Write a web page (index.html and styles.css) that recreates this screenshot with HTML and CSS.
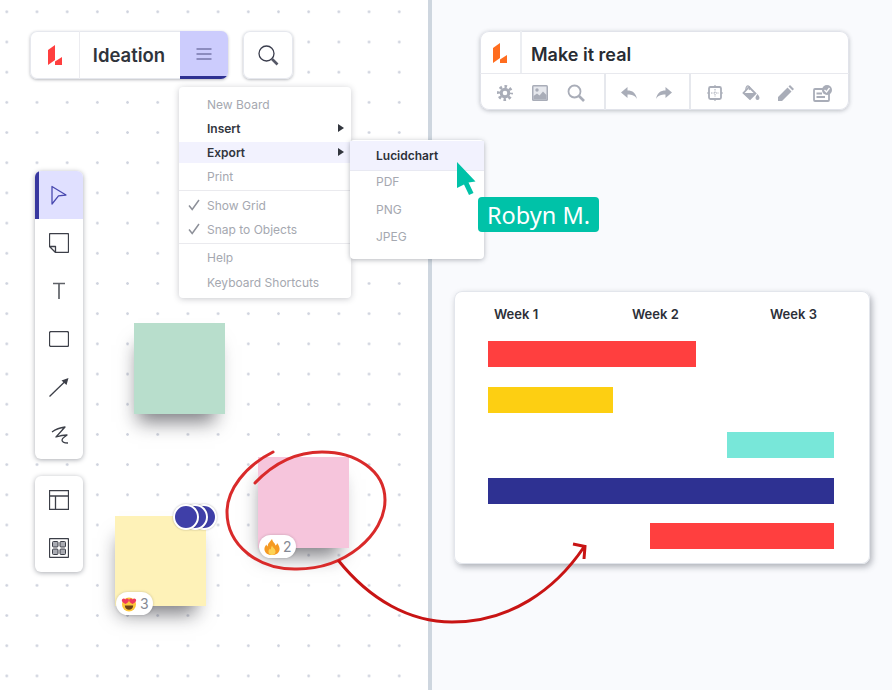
FILE: index.html
```html
<!DOCTYPE html>
<html lang="en">
<head>
<meta charset="utf-8">
<title>Ideation</title>
<link rel="stylesheet" href="styles.css">
</head>
<body>
<main class="stage">
  <section class="pane-left">
    <div class="top-row">
      <div class="panel board-bar">
        <div class="logo-cell">
          <svg class="logo" viewBox="0 0 14 20" width="14" height="20"><path class="logo-red" d="M0 5 7 0V15L0 20Z"/><path class="logo-red" d="M7 20V16.500L14 12V20Z"/></svg>
        </div>
        <div class="board-title">Ideation</div>
        <div class="burger">
          <svg viewBox="0 0 16 12" width="16" height="12"><path class="burger-line" d="M.5 1H15.500M.5 6H15.500M.5 11H15.500"/></svg>
        </div>
      </div>
      <div class="panel search-btn">
        <svg viewBox="0 0 24 24" width="24" height="24"><circle class="ink-line" cx="10.500" cy="10.500" r="7.500"/><path class="search-handle" d="M16 16 21.500 21.500"/></svg>
      </div>
    </div>

    <div class="panel tools">
      <div class="tool tool-active"><svg viewBox="0 0 20 20" width="20" height="20"><path class="tool-navy" d="M3 1.500 17 10 9.500 10.800 3 19Z"/></svg></div>
      <div class="tool"><svg viewBox="0 0 20 20" width="20" height="20"><path class="tool-ink" d="M1.500.5H18.500Q19.500.5 19.500 1.500V18.500Q19.500 19.500 18.500 19.500H6.500L.5 13.500V1.500Q.5.5 1.500.5ZM.5 13.500H6.500V19.500"/></svg></div>
      <div class="tool"><svg viewBox="0 0 20 20" width="20" height="20"><path class="tool-text" d="M4 2.500H16M10 2.500V18"/></svg></div>
      <div class="tool"><svg viewBox="0 0 20 16" width="20" height="16"><rect class="tool-ink" x="0.500" y="0.500" width="19" height="15" rx="1.500"/></svg></div>
      <div class="tool"><svg viewBox="0 0 20 20" width="20" height="20"><path class="tool-ink" d="M.5 19.500 16 4.500"/><path class="tool-fill" d="M12.500 3.500 19.500 1 17.500 8Z"/></svg></div>
      <div class="tool"><svg viewBox="0 0 20 20" width="20" height="20"><path class="tool-ink" d="M3 7C7 4 12 2.500 16 2L7 12C10 11 14 10 18 10 16 12 13 13 13 15 13 17 16 18 19 18"/></svg></div>
    </div>

    <div class="panel tools tools-secondary">
      <div class="tool"><svg viewBox="0 0 20 20" width="20" height="20"><path class="tool-ink" d="M.5.500H19.500V19.500H.5ZM.5 6H19.500M6.500 6V19.500"/></svg></div>
      <div class="tool"><svg viewBox="0 0 20 20" width="20" height="20"><rect class="tool-ink" x="0.500" y="0.500" width="19" height="19" rx="1"/><rect class="tile" x="3.500" y="3.500" width="5.500" height="5.500" rx="1"/><rect class="tile" x="11" y="3.500" width="5.500" height="5.500" rx="1"/><rect class="tile" x="3.500" y="11" width="5.500" height="5.500" rx="1"/><rect class="tile" x="11" y="11" width="5.500" height="5.500" rx="1"/></svg></div>
    </div>

    <div class="sticky sticky-green"></div>
    <div class="sticky sticky-yellow"></div>
    <div class="sticky sticky-pink"></div>

    <div class="avatars">
      <span class="avatar avatar-front"></span><span class="avatar avatar-mid"></span><span class="avatar"></span>
    </div>

    <div class="reaction reaction-yellow">
      <svg viewBox="0 0 16 16" width="16" height="16"><circle class="face" cx="8" cy="8.500" r="7"/><path class="mouth" d="M3.800 9.500H12.200C12 12.500 10 13.800 8 13.800S4 12.500 3.800 9.500Z"/><path class="heart" d="M4.500 8C1 6 .3 4.500 1.200 3.200 2.200 2 3.800 2.300 4.500 3.500 5.200 2.300 6.800 2 7.600 3.200 8.400 4.500 7.800 6 4.500 8Z"/><path class="heart" d="M11.500 8C8.200 6 7.600 4.500 8.400 3.200 9.200 2 10.800 2.300 11.500 3.500 12.200 2.300 13.800 2 14.800 3.200 15.700 4.500 15 6 11.500 8Z"/></svg>
      <span>3</span>
    </div>
    <div class="reaction reaction-pink">
      <svg viewBox="0 0 16 16" width="16" height="16"><path class="flame-out" d="M8 0C8.500 3 11 4 11.500 6.500 12.500 6 13 5 13 4 15 6.500 16 9 15.500 11 15 14 12 16 8 16S1 14 .5 11C.2 9 1 7 2.500 5.500 2.700 6.500 3 7 3.800 7.500 3.500 4.500 6 3 8 0Z"/><path class="flame-in" d="M8 6.500C8.300 8.500 11 9.500 11.500 12 11.800 14.500 10 16 8 16S4.200 14.500 4.500 12C4.800 10.500 5.500 10 6 9.500 6.200 10 6.500 10.500 7 10.500 6.800 9 7.300 8 8 6.500Z"/></svg>
      <span>2</span>
    </div>

    <nav class="menu">
      <div class="menu-item muted">New Board</div>
      <div class="menu-item strong">Insert<span class="caret"></span></div>
      <div class="menu-item strong menu-hover">Export<span class="caret"></span></div>
      <div class="menu-item muted">Print</div>
      <hr class="menu-rule">
      <div class="menu-item muted"><svg class="check" viewBox="0 0 12 12" width="12" height="12"><path d="M1 6.500 4.200 10.500 11 1"/></svg>Show Grid</div>
      <div class="menu-item muted"><svg class="check" viewBox="0 0 12 12" width="12" height="12"><path d="M1 6.500 4.200 10.500 11 1"/></svg>Snap to Objects</div>
      <hr class="menu-rule rule-tight">
      <div class="menu-item muted">Help</div>
      <div class="menu-item muted menu-last">Keyboard Shortcuts</div>
    </nav>
  </section>

  <div class="pane-divider"></div>

  <section class="pane-right">
    <div class="panel doc-bar">
      <div class="doc-head">
        <div class="doc-logo">
          <svg viewBox="0 0 14 20" width="14" height="20"><path class="logo-orange" d="M0 5 7 0V15L0 20Z"/><path class="logo-orange" d="M7 20V16.500L14 12V20Z"/></svg>
        </div>
        <div class="doc-title">Make it real</div>
      </div>
      <div class="doc-tools">
        <div class="doc-group group-a">
          <svg viewBox="0 0 16 16" width="16" height="16"><circle class="gear-teeth" cx="8" cy="8" r="6.500"/><circle class="gear-ring" cx="8" cy="8" r="3.800"/></svg>
          <svg viewBox="0 0 16 16" width="16" height="16"><rect class="icon-fill" width="16" height="16" rx="1.500"/><rect class="sky" x="1.500" y="1.500" width="13" height="13"/><circle class="icon-fill" cx="5" cy="5" r="1.700"/><path class="icon-fill" d="M1.500 14.500V11L5 8.500 7.500 10.500 11 6.500 14.500 10V14.500Z"/></svg>
          <svg viewBox="0 0 18 18" width="18" height="18"><circle class="icon-line" cx="7.500" cy="7.500" r="6"/><path class="icon-thick" d="M12 12 17 17"/></svg>
        </div>
        <div class="doc-group group-b">
          <svg viewBox="0 0 16 14" width="16" height="14"><path class="icon-fill" d="M6.500 1V4.500C11.500 4.500 15 7 16 13 14 9.500 11 8.500 6.500 8.500V12L0 6.500Z"/></svg>
          <svg viewBox="0 0 16 14" width="16" height="14"><path class="icon-fill" d="M9.500 1V4.500C4.500 4.500 1 7 0 13 2 9.500 5 8.500 9.500 8.500V12L16 6.500Z"/></svg>
        </div>
        <div class="doc-group group-c">
          <svg viewBox="0 0 16 16" width="16" height="16"><rect class="icon-line" x="2" y="2" width="12" height="12" rx="1.500"/><path class="icon-thin" d="M8 0V2M8 14V16M0 8H2M14 8H16"/><path class="icon-dots" d="M8 4V12M4 8H12"/></svg>
          <svg viewBox="0 0 18 16" width="18" height="16"><path class="icon-line" d="M7 2 13.500 8.500 8 14 1.500 8Z"/><path class="icon-fill" d="M1 8H14L8 14.500Z"/><path class="icon-thin" d="M4 5C3.500 2.500 5 .5 6.500 1 8 1.500 8 3.500 7 5"/><path class="icon-fill" d="M15.500 9C16.500 10.500 17.500 11.500 17.500 13A2 2 0 1 1 13.500 13C13.500 11.500 14.500 10.500 15.500 9Z"/></svg>
          <svg viewBox="0 0 16 16" width="16" height="16"><path class="icon-fill" d="M12 0 16 4 14.500 5.500 10.500 1.500ZM9.500 2.500 13.500 6.500 4 16H0V12Z"/></svg>
          <svg viewBox="0 0 19 17" width="19" height="17"><rect class="icon-line" x="1" y="4" width="15" height="12" rx="1"/><path class="icon-line" d="M3.500 8.500H9M3.500 12H12"/><circle class="icon-fill" cx="14" cy="5" r="5"/><path class="check-white" d="M11.500 5 13.500 7 16.500 3"/></svg>
        </div>
      </div>
    </div>

    <div class="panel gantt">
      <div class="gantt-head"><span>Week 1</span><span>Week 2</span><span>Week 3</span></div>
      <div class="gantt-bars">
        <div class="bar bar-red bar-one"></div>
        <div class="bar bar-yellow bar-two"></div>
        <div class="bar bar-teal bar-three"></div>
        <div class="bar bar-navy bar-four"></div>
        <div class="bar bar-red bar-five"></div>
      </div>
    </div>
  </section>

  <aside class="submenu">
    <div class="sub-item sub-hover">Lucidchart</div>
    <div class="sub-item">PDF</div>
    <div class="sub-item">PNG</div>
    <div class="sub-item">JPEG</div>
  </aside>

  <svg class="ink-layer" viewBox="0 0 892 690" width="892" height="690">
    <path class="ink-circle" d="M273 452C245 466 227 490 227 512 227 545 258 570 297 569 345 569 385 535 385 500 385 470 355 452 322 452 295 452 272 465 255 483"/>
    <path class="ink-arrow" d="M338 560C370 600 410 622 452 622 510 622 555 590 584 547M573 544 585 546.500 584 559"/>
  </svg>

  <div class="cursor">
    <svg viewBox="0 0 20 34" width="20" height="34"><path class="cursor-arrow" d="M0 0 18.500 19.500 11.500 20.500 16.500 31 12 33 7 22.500 0 26Z"/></svg>
    <div class="cursor-label">Robyn M.</div>
  </div>
</main>
</body>
</html>
```
FILE: styles.css
```css
* { box-sizing: border-box; }
html, body { margin: 0; height: 100%; overflow: hidden; }
body { font-family: Inter, "Liberation Sans", sans-serif; color: #282c33; background: #fff; }

.stage { position: relative; display: flex; width: 892px; height: 690px; overflow: hidden; }

.pane-left {
  position: relative;
  flex: 0 0 428px;
  height: 690px;
  padding: 31px 0 0 30px;
  background-color: #fff;
  background-image: radial-gradient(circle, #cfd3de 0, #cfd3de 1px, transparent 1.6px);
  background-size: 30.2px 30.2px;
  background-position: 21.9px 26.9px;
}
.pane-divider { flex: 0 0 4px; height: 690px; background: #ced6df; }
.pane-right { flex: 0 0 460px; height: 690px; padding: 31px 0 0 48px; background: #f9fafd; }

.panel {
  background: #fff;
  border-radius: 7px;
  box-shadow: inset 0 0 0 1px #e6e8ee, 0 1px 3px rgba(50, 55, 70, .35);
}

.top-row { display: flex; gap: 15px; height: 48px; }
.board-bar { display: flex; width: 198px; overflow: hidden; }
.logo-cell { display: flex; align-items: center; justify-content: center; width: 50px; border-right: 1px solid #ececf0; }
.logo-red { fill: #ff3f3f; }
.logo-orange { fill: #ff6d1f; }
.board-title { display: flex; align-items: center; justify-content: center; width: 100px; padding-right: 2px; font-size: 18.500px; font-weight: 600; color: #30343b; }
.burger { display: flex; align-items: center; justify-content: center; width: 48px; background: #ccccfd; border-bottom: 3px solid #2e3192; }
.burger-line { fill: none; stroke: #4c4c80; stroke-width: 1; }
.ink-line { fill: none; stroke: #3a3d4d; stroke-width: 1.300; }
.search-btn { display: flex; align-items: center; justify-content: center; width: 50px; }
.search-handle { fill: none; stroke: #555866; stroke-width: 2.600; }

.tools { display: flex; flex-direction: column; width: 48px; margin: 92px 0 0 5px; overflow: hidden; border-radius: 6px; box-shadow: 0 1px 5px rgba(40, 45, 60, .4); }
.tools-secondary { margin-top: 17px; }
.tool { display: flex; align-items: center; justify-content: center; height: 48px; }
.tool-active { background: #e0e0ff; border-left: 4px solid #38389f; padding-right: 4px; }
.tool-navy { fill: none; stroke: #4a4ab0; stroke-width: 1.300; stroke-linejoin: round; }
.tool-ink { fill: none; stroke: #3c3f48; stroke-width: 1.300; stroke-linejoin: round; }
.tool-text { fill: none; stroke: #5f6268; stroke-width: 1.700; }
.tool-fill { fill: #3c3f48; }
.tile { fill: #a9abb2; stroke: #3c3f48; stroke-width: 1; }

.sticky { position: absolute; width: 91px; height: 91px; box-shadow: -3px 15px 18px -7px rgba(20, 20, 30, .55); }
.sticky-green { left: 134px; top: 323px; background: #b8decc; }
.sticky-yellow { left: 115px; top: 516px; height: 90px; background: #fef2b8; }
.sticky-pink { left: 258px; top: 457px; background: #f6c5dc; }

.avatars { position: absolute; left: 173px; top: 504px; display: flex; }
.avatar { position: relative; width: 26px; height: 26px; margin-left: -17px; border: 2px solid #fff; border-radius: 50%; background: #3f3fa8; box-shadow: 0 0 2px rgba(0, 0, 0, .3); }
.avatar-front { margin-left: 0; z-index: 2; }
.avatar-mid { z-index: 1; }

.reaction { position: absolute; display: flex; align-items: center; gap: 3px; height: 23px; padding: 0 4px 0 5px; border-radius: 12px; background: #fff; font-size: 14px; color: #858994; box-shadow: 0 0 3px rgba(0, 0, 0, .2); }
.reaction-yellow { left: 116px; top: 592px; }
.reaction-pink { left: 259px; top: 535px; }
.face { fill: #fcc63a; }
.mouth { fill: #6d4318; }
.heart { fill: #ef3a5d; }
.flame-out { fill: #f59a23; }
.flame-in { fill: #fdd255; }

.menu { position: absolute; left: 179px; top: 87px; width: 172px; height: 211px; padding-top: 5px; background: #fff; border-radius: 4px; box-shadow: 0 1px 6px rgba(40, 45, 60, .25); font-size: 12px; }
.menu-item { position: relative; display: flex; align-items: center; height: 24px; padding-left: 28px; }
.menu-last { margin-top: 1px; }
.muted { color: #a5a8b0; }
.strong { font-weight: 600; color: #32363e; }
.menu-hover { height: 21px; margin: 1.500px 0; background: #f2f2fe; }
.caret { position: absolute; left: 159px; top: 50%; margin-top: -4px; border-left: 6px solid #32363e; border-top: 4px solid transparent; border-bottom: 4px solid transparent; }
.menu-rule { height: 1px; margin: 2px 0; border: 0; background: #eaeaee; }
.rule-tight { margin-bottom: 1px; }
.check { position: absolute; left: 9px; top: 6px; }
.check path { fill: none; stroke: #8d9099; stroke-width: 1.500; }

.doc-bar { width: 369px; height: 79px; border-radius: 9px; overflow: hidden; box-shadow: inset 0 0 0 1px #e1e3ea, 0 1px 4px rgba(50, 55, 70, .3); }
.doc-head { display: flex; height: 43px; border-bottom: 1px solid #e8e9ee; }
.doc-logo { display: flex; align-items: center; justify-content: center; width: 42px; padding-top: 2px; border-right: 2px solid #eceef2; }
.doc-title { display: flex; align-items: center; padding: 5px 0 0 9px; font-size: 18px; font-weight: 600; color: #282c33; }
.doc-tools { display: flex; height: 36px; }
.doc-group { display: flex; align-items: center; justify-content: space-between; padding-top: 2px; }
.doc-group + .doc-group { border-left: 2px solid #e6e8ed; }
.group-a { width: 124px; padding-left: 17px; padding-right: 19px; }
.group-b { width: 85px; padding-left: 15px; padding-right: 17px; }
.group-c { width: 160px; padding-left: 16px; padding-right: 17px; }
.icon-fill { fill: #a9adb8; }
.sky { fill: #e6e8ed; }
.icon-line { fill: none; stroke: #a9adb8; stroke-width: 1.800; }
.icon-thick { fill: none; stroke: #a9adb8; stroke-width: 2.600; }
.icon-thin { fill: none; stroke: #a9adb8; stroke-width: 1.200; }
.icon-dots { fill: none; stroke: #a9adb8; stroke-width: 1; stroke-dasharray: 1.500 1; }
.gear-teeth { fill: none; stroke: #a9adb8; stroke-width: 3; stroke-dasharray: 2.550 2.550; stroke-dashoffset: 1.270; }
.gear-ring { fill: none; stroke: #a9adb8; stroke-width: 3; }
.check-white { fill: none; stroke: #fff; stroke-width: 1.300; }

.gantt { width: 416px; height: 273px; margin: 181px 0 0 -26px; padding: 14px 34px 0; border-radius: 8px; box-shadow: inset 0 0 0 1px #e3e6ec, 2px 3px 6px rgba(40, 45, 60, .35); }
.gantt-head { display: flex; height: 18px; align-items: center; padding-left: 6px; font-size: 13px; font-weight: 600; color: #2c3038; }
.gantt-head span { flex: 0 0 138px; }
.gantt-bars { display: flex; flex-direction: column; gap: 19.500px; margin-top: 18px; }
.bar { height: 26px; }
.bar-red { background: #ff3f3f; }
.bar-yellow { background: #fdcf12; }
.bar-teal { background: #78e7d9; }
.bar-navy { background: #2e3192; }
.bar-one { width: 208px; }
.bar-two { width: 125px; }
.bar-three { width: 107px; margin-left: 239px; }
.bar-four { width: 346px; }
.bar-five { width: 184px; margin-left: 162px; }

.submenu { position: absolute; left: 350px; top: 140px; width: 134px; height: 119px; padding-top: 1px; background: #fff; border-radius: 4px; box-shadow: 0 1px 5px rgba(40, 45, 60, .35); font-size: 12px; color: #a5a8b0; }
.sub-item { display: flex; align-items: center; height: 27.500px; padding-left: 26px; }
.sub-hover { height: 30px; margin-bottom: -3px; background: #f2f2fe; border-bottom: 1px solid #e8e9f2; font-weight: 600; color: #2c3038; }

.ink-layer { position: absolute; left: 0; top: 0; pointer-events: none; }
.ink-circle { fill: none; stroke: #d92a2a; stroke-width: 3; stroke-linecap: round; }
.ink-arrow { fill: none; stroke: #c81414; stroke-width: 3; }

.cursor { position: absolute; left: 457px; top: 162px; width: 142px; height: 70px; }
.cursor-arrow { fill: #00c2a8; }
.cursor svg { display: block; }
.cursor-label { position: absolute; left: 21px; top: 35px; display: flex; align-items: center; height: 35px; padding: 0 9px; border-radius: 4px; background: #00c2a8; font-family: "Noto Sans", sans-serif; font-size: 23.500px; color: #fff; white-space: nowrap; }
```
